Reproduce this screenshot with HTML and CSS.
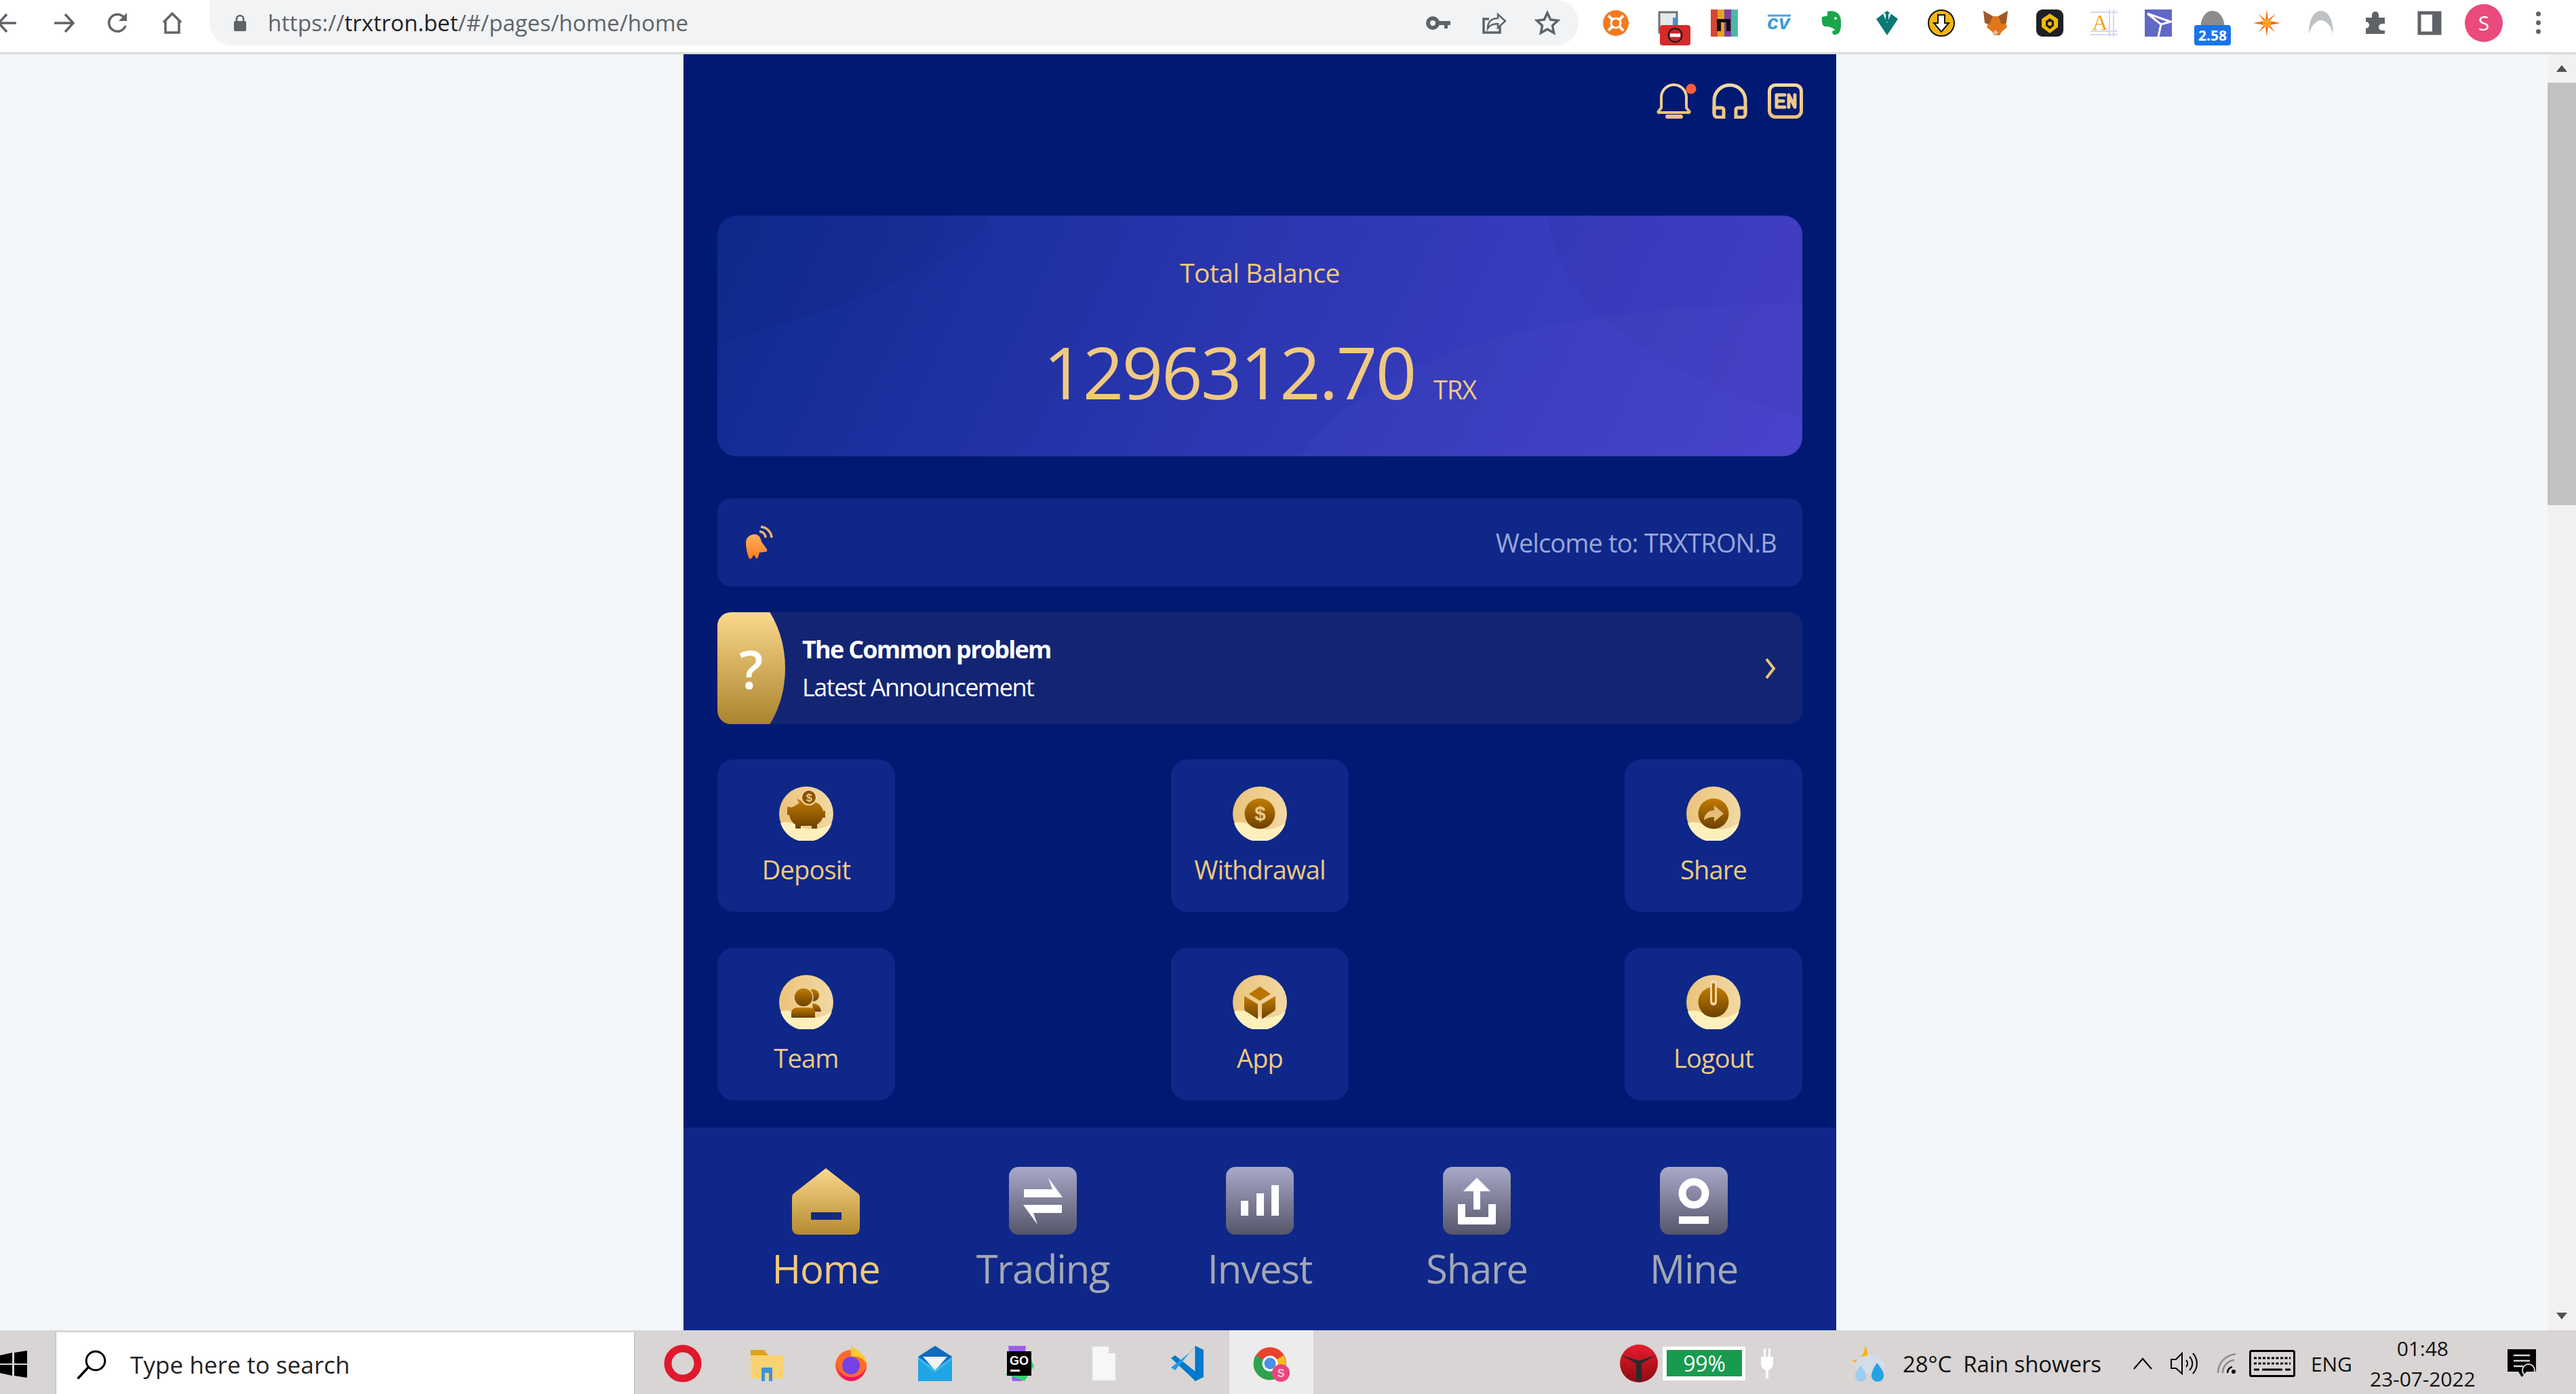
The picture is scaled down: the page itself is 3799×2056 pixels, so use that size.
FILE: index.html
```html
<!DOCTYPE html>
<html lang="en">
<head>
    <meta charset="UTF-8">
    <title>trxtron.bet</title>
    <link rel="stylesheet" href="styles.css">
</head>
<body>
<svg class="defs" aria-hidden="true">
    <defs>
        <linearGradient id="gold-line" x1="0" y1="0" x2="0" y2="1">
            <stop offset="0" stop-color="#f3d9a4"/>
            <stop offset="1" stop-color="#e9c27a"/>
        </linearGradient>
        <linearGradient id="coin-base" x1="0" y1="0" x2="1" y2="0">
            <stop offset="0" stop-color="#ebc47c"/>
            <stop offset="1" stop-color="#f1d8a4"/>
        </linearGradient>
        <linearGradient id="coin-glyph" x1="0" y1="0" x2="0" y2="1">
            <stop offset="0" stop-color="#c27c00"/>
            <stop offset="1" stop-color="#6b4000"/>
        </linearGradient>
        <linearGradient id="home-gold" x1="0" y1="0" x2="0" y2="1">
            <stop offset="0" stop-color="#fbd88c"/>
            <stop offset="1" stop-color="#b48a30"/>
        </linearGradient>
        <linearGradient id="nav-grey" x1="0" y1="0" x2="0" y2="1">
            <stop offset="0" stop-color="#a9a9c9"/>
            <stop offset="1" stop-color="#55556b"/>
        </linearGradient>
        <linearGradient id="bell-orange" x1="0" y1="0" x2="0" y2="1">
            <stop offset="0" stop-color="#ffb25e"/>
            <stop offset="1" stop-color="#ff7a1f"/>
        </linearGradient>
        <linearGradient id="red-orb" x1="0" y1="0" x2="0" y2="1">
            <stop offset="0" stop-color="#e81c2e"/>
            <stop offset="1" stop-color="#8e0a12"/>
        </linearGradient>
        <symbol id="coin" viewBox="0 0 80 80">
            <circle cx="40" cy="40" r="40" fill="url(#coin-base)"/>
            <path d="M2 54 C18 48 30 62 46 63 C58 64 68 60 78 54 A40 40 0 0 1 2 54Z" fill="#fdf0bd"/>
        </symbol>
    </defs>
</svg>

<div class="screen">
    <header class="toolbar">
        <div class="nav-btns">
            <svg class="tool" viewBox="0 0 40 40"><path d="M30 20H5M16 7 4 20l12 13" class="tool-line"/></svg>
            <svg class="tool" viewBox="0 0 40 40"><path d="M6 20h26M22 7l12 13-12 13" class="tool-line"/></svg>
            <svg class="tool" viewBox="0 0 40 40"><path d="M31 24a12.500 12.500 0 1 1-2-12" class="tool-line"/><path d="M33 5v12H21z" fill="#5f6368"/></svg>
            <svg class="tool" viewBox="0 0 40 40"><path d="M7 19 20 6l13 13M10 17v17h20V17" class="tool-line"/></svg>
        </div>
        <div class="omnibox">
            <svg class="lock" viewBox="0 0 24 28"><path d="M7 12V8a5 5 0 0 1 10 0v4" fill="none" stroke="#5f6368" stroke-width="2.600"/><rect x="3" y="11" width="18" height="15" rx="2" fill="#5f6368"/></svg>
            <span class="url">https://<b>trxtron.bet</b>/#/pages/home/home</span>
            <div class="omni-icons">
                <svg class="tool" viewBox="0 0 40 40"><circle cx="11" cy="20" r="7" fill="none" stroke="#5f6368" stroke-width="6"/><path d="M18 17h19v6h-4v5h-5v-5H18z" fill="#5f6368"/></svg>
                <svg class="tool" viewBox="0 0 40 40"><path d="M30 24v10H6V14h8" class="tool-line"/><path d="M12 28c0-10 6-15 15-15V7l11 10-11 10v-6c-7 0-12 2-15 7z" class="tool-line thin"/></svg>
                <svg class="tool" viewBox="0 0 40 40"><path d="m20 5 4.600 10 10.900 1.300-8 7.500 2.100 10.700L20 29l-9.600 5.500 2.100-10.700-8-7.500L15.400 15z" class="tool-line"/></svg>
            </div>
        </div>
        <div class="extensions">
            <svg class="ext" viewBox="0 0 40 40"><circle cx="20" cy="20" r="19" fill="#f47a20"/><circle cx="20" cy="20" r="7" fill="none" stroke="#fff" stroke-width="3"/><path d="m9 9 6 6M31 9l-6 6M9 31l6-6M31 31l-6-6" stroke="#fff" stroke-width="4"/></svg>
            <span class="ext-wrap">
                <svg class="ext" viewBox="0 0 40 40"><path d="M4 4h26v30H4z" fill="#e6e9ea" stroke="#6d7275" stroke-width="3"/><path d="M24 12h6v20h-6z" fill="#4a90d9"/></svg>
                <svg class="ext-badge" viewBox="0 0 45 30"><rect width="45" height="30" rx="4" fill="#d42a2a"/><circle cx="22.500" cy="15" r="11" fill="#1b1b1b"/><circle cx="22.500" cy="15" r="9" fill="#c62828"/><rect x="15" y="12.500" width="15" height="5" fill="#fff"/></svg>
            </span>
            <svg class="ext" viewBox="0 0 40 40"><rect width="40" height="40" rx="5" fill="#7a3fa0"/><path d="M0 0h10v40H0z" fill="#d8452e"/><path d="M30 0h10v40H30z" fill="#4fb7a5"/><path d="M10 0h10v40H10z" fill="#e8a022"/><path d="M9 14h20v18h-6V19h-8v13H9z" fill="#111"/></svg>
            <svg class="ext" viewBox="0 0 40 40"><path d="M3 10h34L30 34H2z" fill="#fff"/><text x="20" y="29" class="ext-cv">cv</text><path d="M4 9h34" stroke="#4aa3df" stroke-width="3"/></svg>
            <svg class="ext" viewBox="0 0 40 40"><path d="M12 3c10-3 20 2 20 14 0 8 0 12-2 16s-8 6-10 3 0-6 4-5c-4-5-10-6-16-6C5 25 3 18 4 11l8-2z" fill="#1aa64b"/><circle cx="24" cy="13" r="2" fill="#fff"/></svg>
            <svg class="ext" viewBox="0 0 40 40"><path d="M20 2 36 14 20 38 4 14z" fill="#0b7a75"/><path d="M14 6h12L20 20z" fill="#fff"/><path d="M18 4h4v14h-4z" fill="#0b7a75"/></svg>
            <svg class="ext" viewBox="0 0 40 40"><circle cx="20" cy="20" r="19" fill="#f5b50f" stroke="#111" stroke-width="2"/><path d="M15 8h10v12h6L20 33 9 20h6z" fill="#fff" stroke="#111" stroke-width="2"/></svg>
            <svg class="ext" viewBox="0 0 40 40"><path d="m2 2 14 8h8l14-8-3 18 2 6-8 7-3 5h-8l-3-5-8-7 2-6z" fill="#e2761b"/><path d="m2 2 14 8-5 12-7-2zM38 2 24 10l5 12 7-2z" fill="#a0592a"/><path d="m16 34 4 4 4-4-4-4z" fill="#d7c1b3"/></svg>
            <svg class="ext" viewBox="0 0 40 40"><rect width="40" height="40" rx="9" fill="#1e2026"/><path d="M20 6 32 14v12L20 35 8 26V14z" fill="#f0b90b"/><path d="M20 13 26 17v7l-6 5-6-5v-7z" fill="#1e2026"/><circle cx="20" cy="21" r="3" fill="#f0b90b"/></svg>
            <svg class="ext" viewBox="0 0 40 40"><path d="M0 4h40M0 32h40M0 37h40M28 0v40M34 0v40" stroke="#cfd8f4" stroke-width="2"/><text x="14" y="30" class="ext-a">A</text></svg>
            <svg class="ext" viewBox="0 0 40 40"><rect width="40" height="40" fill="#6067c4"/><path d="M4 6 38 18 24 22 20 40M4 6l20 16" fill="none" stroke="#fff" stroke-width="3"/></svg>
            <span class="ext-wrap">
                <svg class="ext" viewBox="0 0 40 40"><path d="M2 30C2 12 10 2 20 2s18 10 18 28z" fill="#8c8c8c"/><path d="M8 24h24l-6 5h-2l-4-5" fill="none" stroke="#fff" stroke-width="2"/></svg>
                <span class="speed">2.58</span>
            </span>
            <svg class="ext" viewBox="0 0 40 40"><path d="m20 0 2 15 11-9-9 11 16 3-16 3 9 11-11-9-2 15-2-15-11 9 9-11-16-3 16-3-9-11 11 9z" fill="#f96a09"/><circle cx="20" cy="20" r="6" fill="#ffa31a"/></svg>
            <svg class="ext" viewBox="0 0 40 40"><path d="M2 36C2 14 10 2 20 2s18 12 18 34c-4-12-10-20-18-20S6 24 2 36z" fill="#bfc2c5"/></svg>
            <svg class="ext" viewBox="0 0 40 40"><path d="M6 12h9V8a5 5 0 0 1 10 0v4h9v9h-4a5 5 0 0 0 0 10h4v5H6v-8a5 5 0 0 0 0-10z" fill="#5f6368"/></svg>
            <svg class="ext" viewBox="0 0 40 40"><rect x="5" y="5" width="30" height="30" fill="none" stroke="#5f6368" stroke-width="5"/><rect x="24" y="5" width="11" height="30" fill="#5f6368"/></svg>
            <span class="avatar">S</span>
            <span class="menu-dots"><i></i><i></i><i></i></span>
        </div>
    </header>

    <div class="viewport">
        <main class="app">
            <div class="top-icons">
                <svg class="top-icon bell" viewBox="0 0 48 52"><path d="M5 20.500a18.500 18.500 0 0 1 37 0V36l4 5a1 1 0 0 1-1 2H2a1 1 0 0 1-1-2l4-5z" fill="none" stroke="url(#gold-line)" stroke-width="4" stroke-linejoin="round"/><rect x="11" y="46" width="26" height="6" rx="3" fill="#e9c27a"/><circle cx="49" cy="8" r="7.500" fill="#ff5f3c"/></svg>
                <svg class="top-icon" viewBox="0 0 52 52"><path d="M3 44V25a23 22.500 0 0 1 46 0v19" fill="none" stroke="url(#gold-line)" stroke-width="5"/><path d="M3 36h11a3 3 0 0 1 3 3v11H8a5 5 0 0 1-5-5zM49 36H38a3 3 0 0 0-3 3v11h9a5 5 0 0 0 5-5z" fill="none" stroke="#ecc985" stroke-width="5"/></svg>
                <svg class="top-icon" viewBox="0 0 52 52"><rect x="2.500" y="2.500" width="47" height="47" rx="9" fill="none" stroke="url(#gold-line)" stroke-width="5"/><path d="M25 17H13v18h12M13 26h10M31 35V17l9 18V17" fill="none" stroke="#eec98a" stroke-width="5" stroke-linejoin="round" stroke-linecap="round"/></svg>
            </div>

            <section class="balance">
                <svg class="balance-bg" viewBox="0 0 1600 355" preserveAspectRatio="none" aria-hidden="true">
                    <path d="M0 190C200 130 350 80 405 0H0z" fill="#000" opacity=".03"/>
                    <path d="M1225 0C1240 100 1300 200 1600 300V0z" fill="#000" opacity=".025"/>
                    <path d="M860 355C950 220 1200 130 1600 130V355z" fill="#fff" opacity=".015"/>
                </svg>
                <p class="balance-title">Total Balance</p>
                <p class="balance-amount">1296312.70<small>TRX</small></p>
            </section>

            <section class="notice">
                <svg class="notice-bell" viewBox="0 0 44 50"><path d="M17 13c6 0 9 5 10 11l8 11c1 2 0 4-3 4l-8 1-2 7c-1 2-3 2-4 0l-2-4-4 6c-2 1-3 0-4-2-2-6-4-13-4-22C4 18 10 13 17 13z" fill="url(#bell-orange)"/><path d="M24 9a9 9 0 0 1 9 9M26 2a17 17 0 0 1 16 16" fill="none" stroke="#f0b468" stroke-width="3.500"/></svg>
                <span class="notice-text">Welcome to: TRXTRON.B</span>
            </section>

            <section class="problem">
                <div class="problem-tag"><span>?</span></div>
                <div class="problem-text">
                    <strong>The Common problem</strong>
                    <span>Latest Announcement</span>
                </div>
                <svg class="problem-arrow" viewBox="0 0 18 34"><path d="m3 3 11 14-11 14" fill="none" stroke="#e9c27a" stroke-width="4"/></svg>
            </section>

            <section class="actions">
                <a class="action">
                    <svg class="coin" viewBox="0 0 80 80"><use href="#coin"/><path d="M30 24c-2-1-3-3-3-6 2 1 6 3 8 6 8-3 18-3 24 2 3 3 5 6 6 10h3v10h-4c-1 5-5 8-8 10v6h-8v-4H32v4h-8v-6c-5-3-8-8-9-14h-3V30h4c1 3 8-2 14-6z" fill="url(#coin-glyph)"/><circle cx="44" cy="16" r="11" fill="#8d5400" stroke="#f3d9a4" stroke-width="2"/><text x="44" y="22" class="coin-mark small">$</text></svg>
                    <span>Deposit</span>
                </a>
                <a class="action">
                    <svg class="coin" viewBox="0 0 80 80"><use href="#coin"/><circle cx="40" cy="40" r="22.500" fill="url(#coin-glyph)"/><text x="40" y="50" class="coin-mark">$</text></svg>
                    <span>Withdrawal</span>
                </a>
                <a class="action">
                    <svg class="coin" viewBox="0 0 80 80"><use href="#coin"/><circle cx="40" cy="40" r="22.500" fill="url(#coin-glyph)"/><path d="M26 50c0-9 7-15 15-15v-7l14 12-14 12v-7c-6 0-11 1-15 5z" fill="#e6bd7a"/></svg>
                    <span>Share</span>
                </a>
                <a class="action">
                    <svg class="coin" viewBox="0 0 80 80"><use href="#coin"/><circle cx="50" cy="30" r="9" fill="url(#coin-glyph)"/><path d="M49 42c8 0 12 4 13 12H50z" fill="url(#coin-glyph)"/><ellipse cx="36" cy="33" rx="14" ry="14" fill="url(#coin-glyph)" stroke="#efcf95" stroke-width="1.500"/><path d="M18 63V56c0-5 4-8 9-8h18c5 0 8 3 8 8v7z" fill="url(#coin-glyph)"/></svg>
                    <span>Team</span>
                </a>
                <a class="action">
                    <svg class="coin" viewBox="0 0 80 80"><use href="#coin"/><path d="M40 17 56 28 40 38 24 28z" fill="#b87300"/><path d="M17 31 37 43v22L20 54c-2-1-3-3-3-5zM63 31 43 43v22l17-11c2-1 3-3 3-5z" fill="url(#coin-glyph)"/></svg>
                    <span>App</span>
                </a>
                <a class="action">
                    <svg class="coin" viewBox="0 0 80 80"><use href="#coin"/><circle cx="40" cy="40" r="22.500" fill="url(#coin-glyph)"/><path d="M40 12v28" stroke="#f1d8a4" stroke-width="10" stroke-linecap="round"/><path d="M40 14v25" stroke="#a86a00" stroke-width="4" stroke-linecap="round"/></svg>
                    <span>Logout</span>
                </a>
            </section>

            <nav class="tabbar">
                <a class="tab active">
                    <svg class="tab-icon" viewBox="0 0 100 100"><path d="M50 2 96 38c3 2 4 4 4 8v44c0 6-4 10-10 10H10c-6 0-10-4-10-10V46c0-4 1-6 4-8z" fill="url(#home-gold)"/><path d="M28 67h45v11H28z" fill="#11297f"/></svg>
                    <span>Home</span>
                </a>
                <a class="tab">
                    <svg class="tab-icon" viewBox="0 0 100 100"><rect width="100" height="100" rx="14" fill="url(#nav-grey)"/><path d="M22 33h42l-6-17 21 29H22zM78 68H36l6 17-21-29h57z" fill="#fff"/></svg>
                    <span>Trading</span>
                </a>
                <a class="tab">
                    <svg class="tab-icon" viewBox="0 0 100 100"><rect width="100" height="100" rx="14" fill="url(#nav-grey)"/><path d="M22 50h11v22H22zM45 39h11v33H45zM67 27h11v45H67z" fill="#fff"/></svg>
                    <span>Invest</span>
                </a>
                <a class="tab">
                    <svg class="tab-icon" viewBox="0 0 100 100"><rect width="100" height="100" rx="14" fill="url(#nav-grey)"/><path d="M50 16 70 36H55v27H45V36H30z" fill="#fff"/><path d="M22 55h11v19h34V55h11v28c0 1-1 2-2 2H24c-1 0-2-1-2-2z" fill="#fff"/></svg>
                    <span>Share</span>
                </a>
                <a class="tab">
                    <svg class="tab-icon" viewBox="0 0 100 100"><rect width="100" height="100" rx="14" fill="url(#nav-grey)"/><circle cx="50" cy="39" r="17" fill="none" stroke="#fff" stroke-width="11"/><path d="M28 73h44v11H28z" fill="#fff"/></svg>
                    <span>Mine</span>
                </a>
            </nav>
        </main>
        <div class="scrollbar">
            <div class="scroll-btn"><i class="arrow-up"></i></div>
            <div class="scroll-thumb"></div>
            <div class="scroll-btn scroll-bottom"><i class="arrow-down"></i></div>
        </div>
    </div>

    <footer class="taskbar">
        <svg class="start" viewBox="0 0 40 40"><path d="M0 7 18 3v16H0zM21 3 40 0v19H21zM0 21h18v16L0 33zM21 21h19v19l-19-3z" fill="#000"/></svg>
        <div class="search">
            <svg class="search-icon" viewBox="0 0 40 40"><circle cx="25" cy="15" r="11.500" fill="none" stroke="#000" stroke-width="2.500"/><path d="M16 23 3 37" stroke="#000" stroke-width="3"/></svg>
            <span>Type here to search</span>
        </div>
        <div class="apps">
            <span class="app-tile"><svg class="app-icon" viewBox="0 0 56 56"><circle cx="28" cy="28" r="22" fill="none" stroke="#e0182d" stroke-width="11"/></svg></span>
            <span class="app-tile"><svg class="app-icon" viewBox="0 0 56 56"><path d="M4 8h20l6 8h22v34H4z" fill="#f9d372"/><path d="M4 8h20l6 8H4z" fill="#e1a11a"/><path d="M20 34h16v20h-5V42h-6v12h-5z" fill="#3e93d8"/></svg></span>
            <span class="app-tile"><svg class="app-icon" viewBox="0 0 56 56"><circle cx="28" cy="31" r="23" fill="#ff6a2a"/><path d="M28 2c10 6 22 14 24 28-6-10-14-14-24-12z" fill="#ffcb2e"/><circle cx="28" cy="31" r="13" fill="#7542e5"/><path d="M6 30c2 14 12 24 22 24s20-8 24-22c-4 10-14 16-24 16S10 42 6 30z" fill="#f0146a"/></svg></span>
            <span class="app-tile"><svg class="app-icon" viewBox="0 0 56 56"><path d="M3 18 28 2l25 16v36H3z" fill="#36b8ee"/><path d="M3 18 28 2l25 16-25 18z" fill="#0f6cbd"/><path d="M10 18h36L28 38z" fill="#f3f3f3"/><path d="M3 54V22l25 20 25-20v32z" fill="#1a9de0" opacity=".75"/></svg></span>
            <span class="app-tile"><svg class="app-icon" viewBox="0 0 56 56"><path d="M12 2h26l-6 52H18z" fill="#9b5cf6"/><path d="M8 44 40 10l10 22-14 22z" fill="#2fd36f"/><rect x="10" y="10" width="36" height="36" fill="#000"/><text x="28" y="30" class="go-mark">GO</text><rect x="15" y="37" width="14" height="3" fill="#fff"/></svg></span>
            <span class="app-tile"><svg class="app-icon" viewBox="0 0 56 56"><path d="M12 3h24l10 10v40H12z" fill="#f7f7f7" stroke="#e4e4e4"/><path d="M36 3v10h10z" fill="#d8d8d8"/></svg></span>
            <span class="app-tile"><svg class="app-icon" viewBox="0 0 56 56"><path d="M40 2 52 8v40l-12 6L4 20l6-4 30 24z" fill="#007acc"/><path d="M40 2 10 38l-6-4 30-24z" fill="#1f9cf0"/><path d="M40 2v52" stroke="#0065a9" stroke-width="1"/></svg></span>
            <span class="app-tile current">
                <svg class="app-icon" viewBox="0 0 56 56"><circle cx="26" cy="28" r="24" fill="#e8432f"/><path d="M26 28 46 16a24 24 0 0 1-10 34z" fill="#f5bd19"/><path d="M26 28 36 50A24 24 0 0 1 5 16z" fill="#2fa24e"/><circle cx="26" cy="28" r="10" fill="#4a8fe8" stroke="#fff" stroke-width="3"/><circle cx="42" cy="42" r="13" fill="#e8457f"/><text x="42" y="48" class="chrome-mark">S</text></svg>
            </span>
        </div>
        <div class="tray">
            <div class="tray-battery">
                <svg class="orb" viewBox="0 0 56 56"><circle cx="28" cy="28" r="28" fill="url(#red-orb)"/><path d="M3 16 24 28v26h8V28l21-12-25 8z" fill="#2a2a2a"/></svg>
                <div class="battery"><span>99%</span></div>
                <svg class="plug" viewBox="0 0 20 44"><path d="M5 0h3v12H5zM12 0h3v12h-3zM1 12h18v10c0 6-4 9-7 10v12H8V32c-3-1-7-4-7-10z" fill="#fff"/></svg>
            </div>
            <div class="weather">
                <svg class="weather-icon" viewBox="0 0 58 54"><path d="M24 0c6 8 6 22-6 26-6 1-10-1-13-4 10 2 20-8 19-22z" fill="#f5b50f"/><ellipse cx="32" cy="28" rx="22" ry="13" fill="#d2dde8"/><path d="M18 30c6 8 8 12 8 16a8 8 0 0 1-16 0c0-4 2-8 8-16z" fill="#9dcdf0"/><path d="M42 26c8 10 10 14 10 19a9 9 0 0 1-18 0c0-5 2-9 8-19z" fill="#23a3e3"/></svg>
                <span>28°C&nbsp; Rain showers</span>
            </div>
            <div class="tray-icons">
                <svg class="caret" viewBox="0 0 30 20"><path d="m2 18 13-15 13 15" fill="none" stroke="#000" stroke-width="2.200"/></svg>
                <svg class="speaker" viewBox="0 0 42 36"><path d="M2 12h7L18 3v30l-9-8H2z" fill="none" stroke="#000" stroke-width="2"/><path d="M24 13a7 7 0 0 1 0 10M29 8a14 14 0 0 1 0 20M34 3a22 22 0 0 1 0 30" fill="none" stroke="#000" stroke-width="2"/></svg>
                <svg class="wifi" viewBox="0 0 30 32"><path d="M2 30C2 16 12 4 28 2M9 30c0-10 7-18 17-19" fill="none" stroke="#8a8a8a" stroke-width="2.500"/><path d="M16 30c0-5 3-8 7-9" fill="none" stroke="#000" stroke-width="2.500"/><circle cx="25" cy="28" r="3" fill="#000"/></svg>
                <svg class="keyboard" viewBox="0 0 68 40"><rect x="1.500" y="1.500" width="65" height="37" rx="2" fill="none" stroke="#000" stroke-width="3"/><path d="M7 12h54M7 20h54" stroke="#000" stroke-width="3" stroke-dasharray="4 2.500"/><path d="M7 29h8M19 29h30M53 29h8" stroke="#000" stroke-width="3"/></svg>
                <span class="lang">ENG</span>
            </div>
            <div class="clock">
                <span>01:48</span>
                <span>23-07-2022</span>
            </div>
            <svg class="notify" viewBox="0 0 42 42"><path d="M0 0h42v33H28l-7 8-5-8H0z" fill="#000"/><path d="M9 9h24M9 17h24M9 25h14" stroke="#d8d5d4" stroke-width="2.500"/><circle cx="31" cy="31" r="9" fill="none" stroke="#d8d5d4" stroke-width="2"/></svg>
        </div>
    </footer>
</div>
</body>
</html>
```

FILE: styles.css
```css
* {
    margin: 0;
    padding: 0;
    box-sizing: border-box;
}
html, body {
    height: 100%;
    overflow: hidden;
}
body {
    background-color: #f4f7fa;
    font-family: "Open Sans", "Noto Sans", sans-serif;
    color: #000;
}
.defs {
    display: block;
    width: 0;
    height: 0;
}
.screen {
    height: 2056px;
    display: flex;
    flex-direction: column;
}

/* browser toolbar */
.toolbar {
    height: 80px;
    flex: none;
    display: flex;
    background-color: #fff;
    border-bottom: 3px solid #dadada;
}
.nav-btns {
    width: 309px;
    height: 67px;
    display: flex;
    align-items: center;
    gap: 40px;
    margin-left: -6px;
}
.tool {
    width: 40px;
    height: 40px;
    flex: none;
}
.tool-line {
    fill: none;
    stroke: #5f6368;
    stroke-width: 3.500;
}
.tool-line.thin {
    stroke-width: 2.500;
}
.omnibox {
    width: 2019px;
    height: 67px;
    display: flex;
    align-items: center;
    background-color: #f1f3f4;
    border-radius: 0 34px 34px 34px;
    padding-left: 33px;
    margin-left: 6px;
}
.lock {
    width: 24px;
    height: 28px;
    flex: none;
}
.url {
    margin-left: 29px;
    font-size: 33px;
    letter-spacing: .05px;
    color: #5f6368;
    white-space: nowrap;
}
.url b {
    font-weight: 400;
    color: #202124;
}
.omni-icons {
    margin-left: auto;
    margin-right: 26px;
    display: flex;
    gap: 40px;
}
.extensions {
    flex: 1;
    height: 67px;
    display: flex;
    align-items: center;
    gap: 40px;
    padding-left: 35px;
}
.ext-wrap {
    position: relative;
    width: 40px;
    height: 40px;
    flex: none;
}
.ext {
    width: 40px;
    height: 40px;
    flex: none;
    display: block;
}
.ext-badge {
    position: absolute;
    left: 5px;
    top: 23px;
    width: 45px;
    height: 30px;
}
.ext-cv {
    font: italic 700 30px "Liberation Sans", sans-serif;
    fill: #3a9ad9;
    text-anchor: middle;
}
.ext-a {
    font: 32px "Liberation Serif", serif;
    fill: #f4a21c;
    text-anchor: middle;
}
.speed {
    position: absolute;
    left: -7px;
    top: 23px;
    width: 54px;
    height: 30px;
    line-height: 30px;
    border-radius: 4px;
    background-color: #1a73e8;
    color: #fff;
    font-size: 21px;
    font-weight: 700;
    text-align: center;
}
.avatar {
    width: 56px;
    height: 56px;
    flex: none;
    margin: 0 -8px;
    border-radius: 50%;
    background-color: #ea4a7c;
    color: #fff;
    font-size: 30px;
    line-height: 56px;
    text-align: center;
}
.menu-dots {
    width: 40px;
    flex: none;
    display: flex;
    flex-direction: column;
    align-items: center;
    gap: 6px;
}
.menu-dots i {
    width: 7px;
    height: 7px;
    border-radius: 50%;
    background-color: #5f6368;
}

/* page */
.viewport {
    flex: 1;
    min-height: 0;
    display: grid;
    grid-template-columns: 1008px 1700px 1fr 42px;
}
.app {
    grid-column: 2;
    display: flex;
    flex-direction: column;
    background-color: #001a73;
}
.top-icons {
    height: 238px;
    flex: none;
    display: flex;
    justify-content: flex-end;
    gap: 30px;
    padding: 43px 49px 0 0;
}
.top-icon {
    width: 52px;
    height: 52px;
}
.top-icon.bell {
    width: 48px;
    margin-right: 2px;
    overflow: visible;
}
.balance {
    position: relative;
    overflow: hidden;
    height: 355px;
    flex: none;
    margin: 0 50px;
    border-radius: 28px;
    background: linear-gradient(115deg, #0e2a8f 0%, #2f38b4 55%, #4640cc 100%);
    text-align: center;
}
.balance-bg {
    position: absolute;
    left: 0;
    top: 0;
    width: 100%;
    height: 100%;
}
.balance-title {
    position: relative;
    padding-top: 57px;
    font-size: 39px;
    line-height: 54px;
    letter-spacing: -.6px;
    color: #efc981;
}
.balance-amount {
    position: relative;
    margin-top: 46px;
    font-size: 106px;
    line-height: 146px;
    letter-spacing: -2.500px;
    color: #efc981;
}
.balance-amount small {
    margin-left: 27px;
    font-size: 38px;
    letter-spacing: -1px;
}
.notice {
    height: 130px;
    flex: none;
    margin: 62px 50px 0;
    padding: 0 38px;
    display: flex;
    align-items: center;
    justify-content: space-between;
    border-radius: 20px;
    background-color: #0e2788;
}
.notice-bell {
    width: 44px;
    height: 50px;
}
.notice-text {
    font-size: 38px;
    letter-spacing: -.9px;
    color: #9aa6d8;
}
.problem {
    height: 165px;
    flex: none;
    overflow: hidden;
    margin: 38px 50px 0;
    display: flex;
    align-items: center;
    border-radius: 20px;
    background-color: #132572;
}
.problem-tag {
    width: 100px;
    height: 100%;
    flex: none;
    display: flex;
    align-items: center;
    padding-left: 32px;
    background: linear-gradient(180deg, #fbd88c 0%, #ab842f 100%);
    clip-path: ellipse(100px 130px at 0 50%);
    color: #fff;
    font-size: 78px;
    font-weight: 600;
}
.problem-text {
    margin-left: 25px;
    display: flex;
    flex-direction: column;
    gap: 14px;
    color: #fff;
    font-size: 36px;
    line-height: 42px;
    letter-spacing: -1.500px;
}
.problem-text strong {
    font-weight: 700;
    letter-spacing: -1.750px;
}
.problem-arrow {
    width: 18px;
    height: 34px;
    margin-left: auto;
    margin-right: 38px;
}
.actions {
    flex: none;
    margin: 52px 50px 0;
    display: grid;
    grid-template-columns: repeat(3, 262px);
    grid-auto-rows: 225px;
    justify-content: space-between;
    row-gap: 53px;
}
.action {
    display: flex;
    flex-direction: column;
    align-items: center;
    padding-top: 40px;
    border-radius: 24px;
    background-color: #0e2788;
    color: #efc981;
    font-size: 38px;
    letter-spacing: -.8px;
}
.coin {
    width: 80px;
    height: 80px;
    flex: none;
}
.action span {
    margin-top: 16px;
    line-height: 52px;
}
.coin-mark {
    font: 700 30px "Liberation Mono", monospace;
    fill: #eec98a;
    text-anchor: middle;
}
.coin-mark.small {
    font-size: 16px;
}
.tabbar {
    margin-top: auto;
    height: 299px;
    flex: none;
    padding: 58px 50px 0;
    display: grid;
    grid-template-columns: repeat(5, 320px);
    background-color: #0e2788;
}
.tab {
    display: flex;
    flex-direction: column;
    align-items: center;
    color: #a3a7b4;
    font-size: 58px;
    letter-spacing: -1.200px;
}
.tab.active {
    color: #f2c97a;
}
.tab-icon {
    width: 100px;
    height: 100px;
    flex: none;
}
.tab span {
    margin-top: 10px;
    line-height: 80px;
}

/* scrollbar */
.scrollbar {
    grid-column: 4;
    display: flex;
    flex-direction: column;
    background-color: #f1f1f1;
}
.scroll-btn {
    height: 42px;
    flex: none;
    display: flex;
    align-items: center;
    justify-content: center;
}
.scroll-bottom {
    margin-top: auto;
}
.arrow-up, .arrow-down {
    width: 0;
    height: 0;
    border-left: 8px solid transparent;
    border-right: 8px solid transparent;
}
.arrow-up {
    border-bottom: 10px solid #505050;
}
.arrow-down {
    border-top: 10px solid #505050;
}
.scroll-thumb {
    height: 623px;
    background-color: #c1c1c1;
}

/* windows taskbar */
.taskbar {
    height: 94px;
    flex: none;
    display: flex;
    align-items: stretch;
    background-color: #d8d5d4;
}
.start {
    width: 40px;
    height: 40px;
    flex: none;
    margin-top: 30px;
}
.search {
    width: 854px;
    margin: 3px 0 0 42px;
    padding-top: 4px;
    display: flex;
    align-items: center;
    background-color: #fff;
    border-left: 1px solid #bbb;
    border-right: 1px solid #bbb;
    font-size: 35px;
    letter-spacing: .1px;
    color: #222;
}
.search-icon {
    width: 48px;
    height: 48px;
    margin: 0 33px 0 28px;
}
.apps {
    margin-left: 9px;
    display: flex;
}
.app-tile {
    width: 124px;
    padding-top: 4px;
    display: flex;
    align-items: center;
    justify-content: center;
}
.app-tile.current {
    background-color: #edecec;
}
.app-icon {
    width: 56px;
    height: 56px;
}
.go-mark {
    font: 700 18px "Liberation Sans", sans-serif;
    fill: #fff;
    text-anchor: middle;
}
.chrome-mark {
    font: 700 16px "Liberation Sans", sans-serif;
    fill: #f7c5d6;
    text-anchor: middle;
}
.tray {
    flex: 1;
    display: flex;
    align-items: center;
    padding: 4px 0 0 452px;
    font-size: 33px;
    letter-spacing: -.1px;
    color: #111;
}
.tray-battery {
    display: flex;
    align-items: center;
}
.orb {
    width: 56px;
    height: 56px;
}
.battery {
    width: 122px;
    height: 50px;
    margin-left: 7px;
    padding: 5px 5px 6px 6px;
    background-color: #fff;
}
.battery span {
    display: block;
    height: 100%;
    background-color: #169b4f;
    color: #fff;
    font-size: 32px;
    line-height: 39px;
    text-align: center;
}
.plug {
    width: 20px;
    height: 44px;
    margin-left: 22px;
}
.weather {
    margin-left: 110px;
    display: flex;
    align-items: center;
    gap: 22px;
    white-space: nowrap;
}
.weather-icon {
    width: 58px;
    height: 54px;
}
.tray-icons {
    margin-left: 46px;
    display: flex;
    align-items: center;
}
.caret {
    width: 30px;
    height: 20px;
}
.speaker {
    width: 42px;
    height: 36px;
    margin-left: 25px;
}
.wifi {
    width: 30px;
    height: 32px;
    margin-left: 27px;
}
.keyboard {
    width: 68px;
    height: 40px;
    margin-left: 18px;
}
.lang {
    margin-left: 23px;
    font-size: 30px;
}
.clock {
    width: 152px;
    margin-left: 28px;
    display: flex;
    flex-direction: column;
    align-items: center;
    gap: 7px;
    font-size: 30px;
    line-height: 38px;
    white-space: nowrap;
}
.notify {
    width: 42px;
    height: 42px;
    margin-left: 49px;
}
```
